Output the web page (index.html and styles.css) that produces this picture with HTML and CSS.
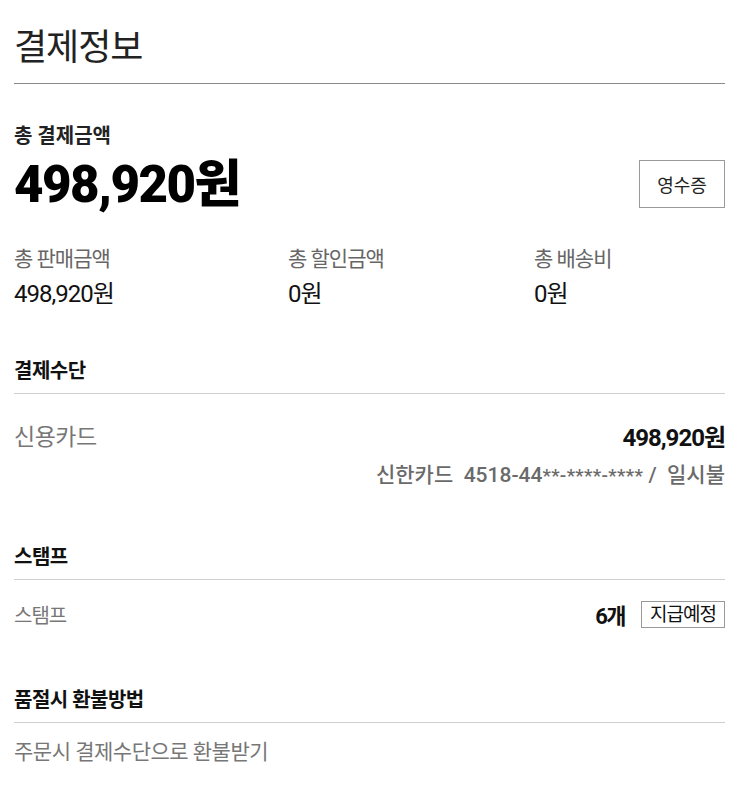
FILE: index.html
```html
<!DOCTYPE html>
<html lang="ko">
<head>
<meta charset="utf-8">
<link rel="stylesheet" href="styles.css">
</head>
<body>
<div class="page">
  <h1 class="title">결제정보</h1>

  <section class="total">
    <div class="total-label">총 결제금액</div>
    <div class="total-row">
      <div class="total-amount">498,920원</div>
      <button class="receipt">영수증</button>
    </div>
    <div class="summary">
      <div class="sum-item">
        <div class="sum-label">총 판매금액</div>
        <div class="sum-value">498,920원</div>
      </div>
      <div class="sum-item">
        <div class="sum-label">총 할인금액</div>
        <div class="sum-value">0원</div>
      </div>
      <div class="sum-item">
        <div class="sum-label">총 배송비</div>
        <div class="sum-value">0원</div>
      </div>
    </div>
  </section>

  <section class="block">
    <h2 class="block-title">결제수단</h2>
    <div class="pay-row">
      <div class="pay-name">신용카드</div>
      <div class="pay-right">
        <div class="pay-amount">498,920원</div>
        <div class="pay-card">신한카드&nbsp; 4518-44<span class="mask">**-****-****</span> / &nbsp;일시불</div>
      </div>
    </div>
  </section>

  <section class="block stamp-block">
    <h2 class="block-title">스탬프</h2>
    <div class="stamp-row">
      <div class="stamp-name">스탬프</div>
      <div class="stamp-right">
        <span class="stamp-count">6개</span>
        <span class="stamp-tag">지급예정</span>
      </div>
    </div>
  </section>

  <section class="block refund-block">
    <h2 class="block-title">품절시 환불방법</h2>
    <div class="refund-text">주문시 결제수단으로 환불받기</div>
  </section>
</div>
</body>
</html>
```

FILE: styles.css
```css
* { box-sizing: border-box; }
html, body { margin: 0; padding: 0; background: #fff; }
body {
  font-family: Roboto, "Noto Sans CJK KR", sans-serif;
  color: #111;
}
.page {
  padding: 0 25px 0 14px;
}
.title {
  margin: 0;
  padding-top: 26px;
  height: 84px;
  font-size: 36px;
  font-weight: 400;
  line-height: 44px;
  letter-spacing: -1px;
  color: #222;
  border-bottom: 1px solid #8a8a8a;
}
.total { padding-top: 37px; }
.total-label {
  font-size: 20px;
  font-weight: 700;
  line-height: 30px;
  letter-spacing: 0;
  color: #222;
}
.total-row {
  display: flex;
  justify-content: space-between;
  align-items: center;
  margin-top: 6px;
}
.total-amount {
  font-size: 51px;
  font-weight: 900;
  line-height: 56px;
  letter-spacing: -1.5px;
  color: #000;
}
.receipt {
  width: 86px;
  height: 48px;
  border: 1px solid #9a9a9a;
  background: #fff;
  font-family: "Noto Sans CJK KR", sans-serif;
  font-size: 18px;
  color: #222;
  padding: 0;
  margin-top: -2px;
}
.summary {
  display: grid;
  grid-template-columns: 274px 246px 1fr;
  margin-top: 32px;
}
.sum-label {
  font-size: 21px;
  line-height: 28px;
  letter-spacing: -1px;
  color: #666;
}
.sum-value {
  font-size: 24px;
  line-height: 30px;
  letter-spacing: -1px;
  color: #111;
  margin-top: 6px;
}
.block { margin-top: 48px; }
.block-title {
  margin: 0;
  font-size: 20px;
  font-weight: 700;
  line-height: 28px;
  letter-spacing: -0.5px;
  color: #111;
  padding-bottom: 8px;
  border-bottom: 1px solid #cfcfcf;
}
.pay-row {
  display: flex;
  justify-content: space-between;
  padding-top: 26px;
}
.pay-name {
  font-size: 23px;
  line-height: 36px;
  color: #777;
  letter-spacing: -0.5px;
}
.pay-right { text-align: right; }
.pay-amount {
  font-size: 24px;
  font-weight: 700;
  line-height: 36px;
  letter-spacing: -1px;
  color: #111;
}
.pay-card {
  font-size: 21px;
  line-height: 30px;
  color: #6a6a6a;
  margin-top: 4px;
  font-weight: 500;
}
.mask { font-size: 19px; letter-spacing: 0.3px; }
.stamp-block { margin-top: 52px; }
.stamp-row {
  display: flex;
  justify-content: space-between;
  align-items: center;
  padding-top: 18px;
}
.stamp-name {
  font-size: 20px;
  color: #777;
  letter-spacing: -1px;
}
.stamp-right { display: flex; align-items: center; gap: 16px; }
.stamp-count {
  font-size: 22px;
  font-weight: 700;
  letter-spacing: -1.5px;
  color: #111;
}
.stamp-tag {
  display: inline-block;
  border: 1px solid #999;
  padding: 0 8px;
  height: 27px;
  line-height: 25px;
  font-size: 19px;
  letter-spacing: -1px;
  color: #111;
}
.refund-block { margin-top: 56px; }
.refund-text {
  padding-top: 14px;
  font-size: 21px;
  line-height: 30px;
  color: #777;
  letter-spacing: -0.5px;
}
```
